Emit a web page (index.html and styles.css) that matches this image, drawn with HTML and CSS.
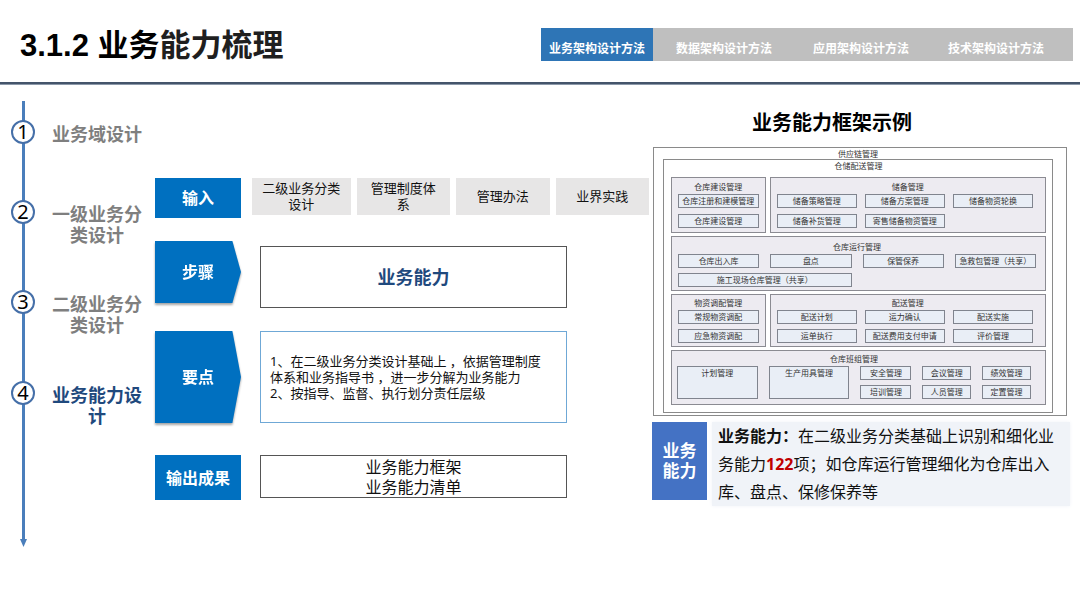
FILE: index.html
```html
<!DOCTYPE html>
<html lang="zh-CN">
<head>
    <meta charset="UTF-8">
    <meta name="viewport" content="width=device-width, initial-scale=1.0">
    <title>3.1.2 业务能力梳理</title>
    <link rel="stylesheet" href="styles.css">
</head>
<body>
    <header class="header">
        <h1>3.1.2 业务<span>能力梳理</span></h1>
        <nav class="tabs">
            <a href="#business" class="active">业务架构设计方法</a>
            <a href="#data">数据架构设计方法</a>
            <a href="#application">应用架构设计方法</a>
            <a href="#technology">技术架构设计方法</a>
        </nav>
    </header>

    <main class="main">
        <aside class="timeline">
            <ol class="steps">
                <li><span class="num">1</span><span class="label">业务域设计</span></li>
                <li><span class="num">2</span><span class="label">一级业务分类设计</span></li>
                <li><span class="num">3</span><span class="label">二级业务分类设计</span></li>
                <li class="current"><span class="num">4</span><span class="label">业务能力设计</span></li>
            </ol>
            <svg class="arrow" width="7" height="8" viewBox="0 0 7 8" aria-hidden="true">
                <path d="M0 0H7L3.5 8Z" fill="#4a7ebb"/>
            </svg>
        </aside>

        <section class="process">
            <div class="row inputs">
                <div class="tag">输入</div>
                <ul class="chips">
                    <li>二级业务分类<br>设计</li>
                    <li>管理制度体<br>系</li>
                    <li>管理办法</li>
                    <li>业界实践</li>
                </ul>
            </div>
            <div class="row">
                <div class="tag-shadow step-tag"><div class="tag pointed">步骤</div></div>
                <div class="box step-box">业务能力</div>
            </div>
            <div class="row">
                <div class="tag-shadow"><div class="tag pointed">要点</div></div>
                <div class="box points">
                    <p>1、在二级业务分类设计基础上 ，依据管理制度<br>体系和业务指导书 ，进一步分解为业务能力<br>2、按指导、监督、执行划分责任层级</p>
                </div>
            </div>
            <div class="row outputs">
                <div class="tag">输出成果</div>
                <div class="box">业务能力框架<br>业务能力清单</div>
            </div>
        </section>

        <section class="example">
            <h2>业务能力框架示例</h2>
            <div class="diagram">
                <h3>供应链管理</h3>
                <div class="domain">
                    <h3>仓储配送管理</h3>
                    <div class="pair">
                        <div class="group build">
                            <h4>仓库建设管理</h4>
                            <div class="items">
                                <span>仓库注册和建模管理</span>
                                <span>仓库建设管理</span>
                            </div>
                        </div>
                        <div class="group build">
                            <h4>储备管理</h4>
                            <div class="items three">
                                <span>储备策略管理</span>
                                <span>储备方案管理</span>
                                <span>储备物资轮换</span>
                                <span>储备补货管理</span>
                                <span>寄售储备物资管理</span>
                            </div>
                        </div>
                    </div>
                    <div class="group run">
                        <h4>仓库运行管理</h4>
                        <div class="items four">
                            <span>仓库出入库</span>
                            <span>盘点</span>
                            <span>保管保养</span>
                            <span>急救包管理（共享）</span>
                            <span class="wide">施工现场仓库管理（共享）</span>
                        </div>
                    </div>
                    <div class="pair">
                        <div class="group">
                            <h4>物资调配管理</h4>
                            <div class="items">
                                <span>常规物资调配</span>
                                <span>应急物资调配</span>
                            </div>
                        </div>
                        <div class="group">
                            <h4>配送管理</h4>
                            <div class="items three">
                                <span>配送计划</span>
                                <span>运力确认</span>
                                <span>配送实施</span>
                                <span>运单执行</span>
                                <span>配送费用支付申请</span>
                                <span>评价管理</span>
                            </div>
                        </div>
                    </div>
                    <div class="group team">
                        <h4>仓库班组管理</h4>
                        <div class="items five">
                            <span class="tall">计划管理</span>
                            <span class="tall">生产用具管理</span>
                            <span>安全管理</span>
                            <span>会议管理</span>
                            <span>绩效管理</span>
                            <span>培训管理</span>
                            <span>人员管理</span>
                            <span>定置管理</span>
                        </div>
                    </div>
                </div>
            </div>
            <div class="summary">
                <div class="badge">业务<br>能力</div>
                <p><b>业务能力：</b>在二级业务分类基础上识别和细化业务能力<strong>122</strong>项；如仓库运行管理细化为仓库出入库、盘点、保修保养等</p>
            </div>
        </section>
    </main>
</body>
</html>
```

FILE: styles.css
```css
* {
    box-sizing: border-box;
}
body {
    margin: 0;
    font-family: "Noto Sans", "Noto Sans CJK SC", sans-serif;
    background-color: #fff;
    color: #111;
}
h1, h2, h3, h4, p, ul, ol {
    margin: 0;
    padding: 0;
}
ul, ol {
    list-style: none;
}

/* header */
.header {
    display: flex;
    justify-content: space-between;
    align-items: center;
    height: 84px;
    padding: 6px 7px 0 20px;
    border-bottom: 2px solid #44546a;
    box-shadow: 0 1px 0 #8c99aa;
}
h1 {
    padding-top: 3px;
    font-family: "Liberation Sans", "Noto Sans CJK SC", sans-serif;
    font-size: 31px;
    line-height: 40px;
    color: #000;
}
h1 span {
    color: #1f1f1f;
}
.tabs {
    display: grid;
    grid-template-columns: 112fr 142fr 132fr 138fr;
    flex: 0 1 532px;
    padding-right: 8px;
    background-color: #bfbfbf;
}
.tabs a {
    padding: 9px 0 1px;
    font-size: 12px;
    line-height: 23px;
    font-weight: bold;
    text-align: center;
    color: #fff;
    text-decoration: none;
    white-space: nowrap;
}
.tabs .active {
    background-color: #2e75b6;
}

.main {
    display: grid;
    grid-template-columns: 155fr 497fr 428fr;
}

/* timeline */
.timeline {
    padding: 17px 0 0 11px;
}
.steps {
    display: grid;
    grid-template-rows: 80px 90px 91px 158px;
    padding-top: 19px;
    background: linear-gradient(#4a7ebb, #4a7ebb) 11px 0 / 3px 100% no-repeat;
}
.steps li {
    display: flex;
    align-items: flex-start;
    gap: 15px;
}
.num {
    flex: none;
    width: 24px;
    height: 24px;
    border: 2px solid #456fa8;
    border-radius: 50%;
    background-color: #fff;
    font-size: 20px;
    line-height: 20px;
    text-align: center;
    color: #000;
}
.label {
    width: 94px;
    padding-top: 4px;
    font-size: 18px;
    line-height: 21px;
    font-weight: bold;
    text-align: center;
    color: #7f7f7f;
}
.current .label {
    color: #1f497d;
}
.arrow {
    display: block;
    margin-left: 9px;
}

/* process */
.process {
    display: flex;
    flex-direction: column;
    gap: 23px;
    padding: 94px 3px 0 0;
}
.row {
    display: grid;
    grid-template-columns: 86px 1fr;
    gap: 19px;
    padding-right: 82px;
}
.inputs {
    gap: 11px;
    padding-right: 0;
}
.outputs {
    margin-top: 9px;
}
.tag {
    display: flex;
    align-items: center;
    justify-content: center;
    height: 100%;
    min-height: 40px;
    padding-bottom: 2px;
    background-color: #0070c0;
    font-size: 16px;
    font-weight: bold;
    color: #fff;
}
.tag-shadow {
    filter: drop-shadow(0 2px 1px rgba(0, 0, 0, 0.35));
}
.step-tag {
    padding-bottom: 5px;
}
.pointed {
    clip-path: polygon(0 0, 90% 0, 100% 50%, 90% 100%, 0 100%);
}
.chips {
    display: grid;
    grid-template-columns: 98fr 93fr 93fr 93fr;
    gap: 6px;
    padding-bottom: 3px;
}
.chips li {
    display: flex;
    align-items: center;
    justify-content: center;
    padding-bottom: 1px;
    background-color: #e7e6e6;
    font-size: 13px;
    line-height: 16px;
    text-align: center;
}
.box {
    display: flex;
    align-items: center;
    justify-content: center;
    border: 1px solid #555;
    font-size: 16px;
    line-height: 20px;
    text-align: center;
}
.step-box {
    min-height: 62px;
    margin-top: 5px;
    font-size: 18px;
    font-weight: bold;
    color: #1f497d;
}
.points {
    justify-content: flex-start;
    min-height: 92px;
    padding-left: 9px;
    border-color: #6fa8d6;
    font-size: 13px;
    line-height: 16px;
    text-align: left;
}
.outputs .box {
    min-height: 43px;
    margin-bottom: 2px;
}

/* example diagram */
.example {
    padding-top: 26px;
}
h2 {
    padding-right: 68px;
    font-size: 20px;
    line-height: 26px;
    text-align: center;
    color: #000;
}
.diagram {
    margin: 11px 13px 0 1px;
    padding: 0 13px 2px 9px;
    border: 1px solid #8a8a8a;
    color: #333;
}
.diagram h3, .diagram h4 {
    font-size: 8px;
    line-height: 11px;
    font-weight: normal;
    text-align: center;
}
.domain {
    display: grid;
    gap: 3px;
    padding: 0 6px 7px 7px;
    border: 1px solid #8a8a8a;
}
.domain > h3 {
    padding-bottom: 3px;
}
.pair {
    display: grid;
    grid-template-columns: 95fr 277fr;
    gap: 4px;
}
.group {
    padding: 1px 6px 3px;
    border: 1px solid #8b8b92;
    background-color: #edebf1;
}
.diagram .group h4 {
    line-height: 14px;
}
.build {
    padding-top: 2px;
    padding-bottom: 4px;
}
.run {
    padding: 3px 9px 3px 6px;
}
.team {
    padding: 1px 14px 5px 5px;
}
.items {
    display: grid;
    gap: 5px 8px;
}
.build .items {
    row-gap: 6px;
}
.items span {
    border: 1px solid #80848e;
    background-color: #e9eef6;
    font-size: 8px;
    line-height: 12px;
    text-align: center;
    white-space: nowrap;
}
.three {
    grid-template-columns: repeat(3, 1fr);
    padding-right: 6px;
}
.four {
    grid-template-columns: repeat(4, 1fr);
    column-gap: 11px;
}
.five {
    grid-template-columns: 81fr 81fr 51fr 49fr 49fr;
    column-gap: 11px;
}
.items .wide {
    grid-column: span 2;
}
.items .tall {
    grid-row: span 2;
}

/* summary */
.summary {
    display: flex;
    align-items: flex-start;
    gap: 5px;
    margin-top: 6px;
}
.badge {
    display: flex;
    align-items: center;
    justify-content: center;
    flex: none;
    width: 55px;
    min-height: 78px;
    background-color: #4472c4;
    font-size: 17px;
    line-height: 20px;
    font-weight: bold;
    color: #fff;
}
.summary p {
    flex: 1;
    margin-right: 10px;
    padding: 0 10px 0 6px;
    background-color: #f0f3f8;
    box-shadow: 0 0 4px #f0f3f8;
    font-size: 16px;
    line-height: 28px;
}
.summary strong {
    color: #c00000;
}
```
